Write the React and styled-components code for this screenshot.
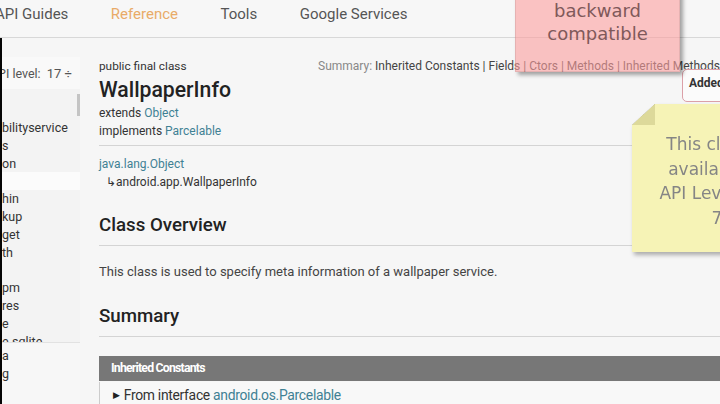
import React from "react";
import styled, { createGlobalStyle } from "styled-components";

const GlobalStyle = createGlobalStyle`
  html, body {
    margin: 0;
    padding: 0;
    background: #f6f6f6;
  }
  body {
    font-family: Roboto, "Liberation Sans", sans-serif;
  }
`;

const Screen = styled.div`
  position: relative;
  width: 720px;
  height: 404px;
  overflow: hidden;
  display: flex;
  background: #f6f6f6;
`;

// screen edge visible at the very left of the capture
const Edge = styled.div`
  width: 2px;
  flex-shrink: 0;
  background: #050505;
`;

const Page = styled.div`
  flex: 1;
  min-width: 0;
  display: flex;
  flex-direction: column;
`;

const TopNav = styled.nav`
  height: 38px;
  box-sizing: border-box;
  border-bottom: 1px solid #d8d8d8;
  background: #f7f7f7;
  display: flex;
  gap: 42.5px;
  padding: 5px 0 0;
  margin-left: -7px;
  white-space: nowrap;
`;

const NavItem = styled.span`
  font-size: 15px;
  line-height: 19px;
  color: ${(p) => (p.$active ? "#e9ab68" : "#555")};
`;

const Body = styled.div`
  flex: 1;
  display: flex;
  min-height: 0;
`;

const Sidebar = styled.aside`
  width: 78px;
  flex-shrink: 0;
  display: flex;
  flex-direction: column;
  padding-top: 19px;
  overflow: hidden;
  white-space: nowrap;
`;

const ApiSelect = styled.div`
  height: 32px;
  display: flex;
  align-items: center;
  gap: 6px;
  margin-left: -4px;
  font-size: 12.5px;
  color: #555;
  background: #f9f9f9;
  b {
    font-weight: 400;
    font-size: 13px;
  }
`;

const PackageList = styled.div`
  position: relative;
  height: 254px;
  box-sizing: border-box;
  padding-top: 30px;
  overflow: hidden;
  background: #f3f3f3;
  border-bottom: 1px solid #e2e2e2;
`;

const ScrollThumb = styled.div`
  position: absolute;
  right: 0;
  top: 5px;
  width: 3px;
  height: 22px;
  background: #c4c4c4;
`;

const SideItem = styled.div`
  height: 17.8px;
  line-height: 17.8px;
  font-size: 12.5px;
  color: #333;
  margin-left: -2px;
  padding-left: 2px;
  background: ${(p) => (p.$selected ? "#fbfbfb" : "transparent")};
`;

const ClassList = styled.div`
  flex: 1;
  padding-top: 4px;
  background: #f7f7f7;
`;

const Main = styled.main`
  flex: 1;
  min-width: 0;
  overflow: hidden;
  padding: 21px 0 0 19px;
  color: #333;
`;

const ClassHeader = styled.div`
  display: flex;
  white-space: nowrap;
`;

const ClassInfo = styled.div`
  width: 219px;
  flex-shrink: 0;
`;

const Modifier = styled.div`
  font-size: 11.8px;
  line-height: 14px;
  color: #333;
`;

const Title = styled.h1`
  margin: 4px 0 1px;
  font-size: 21.2px;
  line-height: 26px;
  font-weight: 500;
  color: #222;
`;

const Line = styled.div`
  font-size: 12px;
  line-height: 18px;
  color: #333;
  padding-left: ${(p) => p.$indent || 0}px;
`;

const Link = styled.span`
  color: #3f8194;
`;

const SummaryNav = styled.div`
  display: flex;
  flex-direction: column;
`;

const SummaryLine = styled.div`
  font-size: 12px;
  line-height: 14px;
  color: #888;
  span {
    color: #444;
  }
`;

const AddedBox = styled.div`
  margin: -4px 0 0 364px;
  width: 150px;
  height: 33px;
  box-sizing: border-box;
  padding: 6px 0 0 6px;
  border: 1px solid #dba0a8;
  border-radius: 5px;
  background: #fbfbfb;
  font-size: 12px;
  font-weight: 700;
  color: #333;
`;

const Divider = styled.hr`
  border: 0;
  border-top: 1px solid #d4d4d4;
  margin: ${(p) => p.$m || "0"};
`;

const SectionTitle = styled.h2`
  margin: ${(p) => p.$top}px 0 9px;
  font-size: 18.7px;
  line-height: 22px;
  font-weight: 500;
  color: #222;
`;

const Paragraph = styled.p`
  margin: 17px 0 0;
  font-size: 13px;
  line-height: 18px;
  color: #444;
  white-space: nowrap;
`;

const Table = styled.div`
  margin-top: 19px;
`;

const TableHead = styled.div`
  height: 25px;
  line-height: 25px;
  padding-left: 12px;
  background: #777;
  color: #fff;
  font-size: 12.3px;
  font-weight: 700;
  letter-spacing: -0.8px;
`;

const TableRow = styled.div`
  display: flex;
  align-items: center;
  gap: 4px;
  height: 22px;
  box-sizing: border-box;
  padding: 3px 0 0 13px;
  margin-top: 1px;
  border-left: 1px solid #ccc;
  background: #f8f8f8;
  font-size: 13.9px;
  letter-spacing: -0.3px;
  color: #333;
  white-space: nowrap;
`;

const Arrow = styled.span`
  font-size: 9px;
  color: #222;
`;

const PinkNote = styled.div`
  position: absolute;
  left: 515px;
  top: -12px;
  width: 165px;
  height: 84px;
  box-sizing: border-box;
  padding-top: 10px;
  background: rgba(252, 158, 158, 0.6);
  border: 1px solid rgba(0, 0, 0, 0.08);
  box-shadow: 3px 3px 4px rgba(0, 0, 0, 0.35);
  text-align: center;
  font-family: "DejaVu Sans", sans-serif;
  font-size: 18px;
  line-height: 23px;
  color: #80595a;
`;

const YellowNoteWrap = styled.div`
  position: absolute;
  left: 632px;
  top: 104px;
  width: 170px;
  height: 148px;
  filter: drop-shadow(0 0 0.6px #777) drop-shadow(2px 3px 2px rgba(0, 0, 0, 0.3));
`;

const YellowNote = styled.div`
  position: relative;
  width: 100%;
  height: 100%;
  box-sizing: border-box;
  padding-top: 28px;
  background: #f6f3b6;
  clip-path: polygon(23px 0, 100% 0, 100% 100%, 0 100%, 0 21px);
  text-align: center;
  font-family: "DejaVu Sans", sans-serif;
  font-size: 17px;
  line-height: 24.7px;
  color: #858585;
  &::before {
    content: "";
    position: absolute;
    left: 0;
    top: 0;
    width: 23px;
    height: 21px;
    background: linear-gradient(to bottom right, transparent 50%, #ddd99a 50%);
  }
`;

const NoteLine = styled.div`
  padding-right: ${(p) => p.$pushLeft || 0}px;
`;

const packages = [
  "bilityservice",
  "s",
  "on",
  "",
  "hin",
  "kup",
  "get",
  "th",
  "",
  "pm",
  "res",
  "e",
  "e.sqlite",
];

export default function App() {
  return (
    <>
      <GlobalStyle />
      <Screen>
        <Edge />
        <Page>
          <TopNav>
            <NavItem>API Guides</NavItem>
            <NavItem $active>Reference</NavItem>
            <NavItem>Tools</NavItem>
            <NavItem>Google Services</NavItem>
          </TopNav>
          <Body>
            <Sidebar>
              <ApiSelect>
                PI level: <b>17 ÷</b>
              </ApiSelect>
              <PackageList>
                <ScrollThumb />
                {packages.map((name, i) => (
                  <SideItem key={i} $selected={i === 3}>
                    {name}
                  </SideItem>
                ))}
              </PackageList>
              <ClassList>
                <SideItem>a</SideItem>
                <SideItem>g</SideItem>
              </ClassList>
            </Sidebar>
            <Main>
              <ClassHeader>
                <ClassInfo>
                  <Modifier>public final class</Modifier>
                  <Title>WallpaperInfo</Title>
                  <Line>
                    extends <Link>Object</Link>
                  </Line>
                  <Line>
                    implements <Link>Parcelable</Link>
                  </Line>
                </ClassInfo>
                <SummaryNav>
                  <SummaryLine>
                    Summary:{" "}
                    <span>
                      Inherited Constants | Fields | Ctors | Methods | Inherited
                      Methods
                    </span>
                  </SummaryLine>
                  <AddedBox>Added in API level 7</AddedBox>
                </SummaryNav>
              </ClassHeader>
              <Divider $m="5px 0 9px" />
              <Line>
                <Link>java.lang.Object</Link>
              </Line>
              <Line $indent={7}>↳android.app.WallpaperInfo</Line>
              <SectionTitle $top={23}>Class Overview</SectionTitle>
              <Divider />
              <Paragraph>
                This class is used to specify meta information of a wallpaper
                service.
              </Paragraph>
              <SectionTitle $top={24}>Summary</SectionTitle>
              <Divider />
              <Table>
                <TableHead>Inherited Constants</TableHead>
                <TableRow>
                  <Arrow>▶</Arrow>
                  <span>
                    From interface <Link>android.os.Parcelable</Link>
                  </span>
                </TableRow>
              </Table>
            </Main>
          </Body>
        </Page>
        <PinkNote>
          backward
          <br />
          compatible
        </PinkNote>
        <YellowNoteWrap>
          <YellowNote>
            <NoteLine>This class is</NoteLine>
            <NoteLine>available in</NoteLine>
            <NoteLine $pushLeft={38}>API Level</NoteLine>
            <NoteLine>7</NoteLine>
          </YellowNote>
        </YellowNoteWrap>
      </Screen>
    </>
  );
}
